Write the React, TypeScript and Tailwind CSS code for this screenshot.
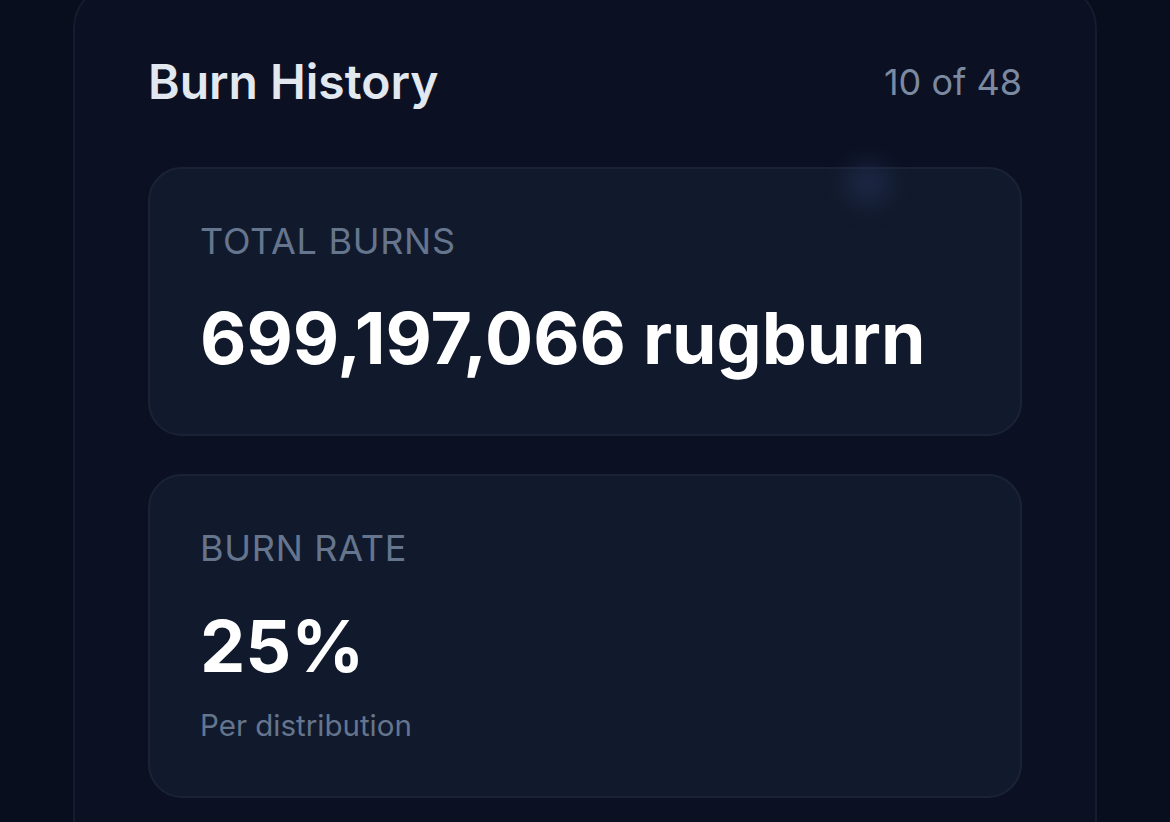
import React from 'react';

const font = { fontFamily: 'Inter, "Noto Sans", sans-serif' };

interface StatCardProps {
  label: string;
  value: string;
  valueClass: string;
  note?: string;
}

function StatCard({ label, value, valueClass, note }: StatCardProps) {
  return (
    <div className="rounded-[34px] border-2 border-[#1a2335] bg-[#111a2c] px-[50px] pt-[50px] pb-[53px]">
      <p className="text-[36px] leading-[44px] tracking-[0.02em] text-[#66758e]">{label}</p>
      <p className={`font-bold text-white ${valueClass}`}>{value}</p>
      {note && <p className="mt-[16px] text-[29.5px] leading-[36px] text-[#66758e]">{note}</p>}
    </div>
  );
}

export default function App() {
  return (
    <div className="h-screen w-full overflow-hidden bg-[#090e1e]" style={font}>
      <div className="ml-[73px] w-[1024px] -mt-[16px] rounded-[44px] border-2 border-[#141c2d] bg-[#0b1122] px-[73px] pt-[68px] pb-[120px]">
        <div className="flex items-center justify-between">
          <h2 className="text-[48px] leading-[56px] font-semibold text-[#e2e8f0]">Burn History</h2>
          <span className="text-[36px] leading-[56px] text-[#7b89a1]">10 of 48</span>
        </div>

        <div className="relative mt-[57px] flex flex-col gap-[38px]">
          <div className="pointer-events-none absolute left-[700px] -top-[4px] h-[40px] w-[40px] rounded-full bg-[#27325a] opacity-60 blur-[12px]" />
          <StatCard
            label="TOTAL BURNS"
            value="699,197,066 rugburn"
            valueClass="mt-[33px] text-[71.5px] leading-[85px]"
          />
          <StatCard
            label="BURN RATE"
            value="25%"
            valueClass="mt-[31px] text-[72px] leading-[90px]"
            note="Per distribution"
          />
        </div>
      </div>
    </div>
  );
}
